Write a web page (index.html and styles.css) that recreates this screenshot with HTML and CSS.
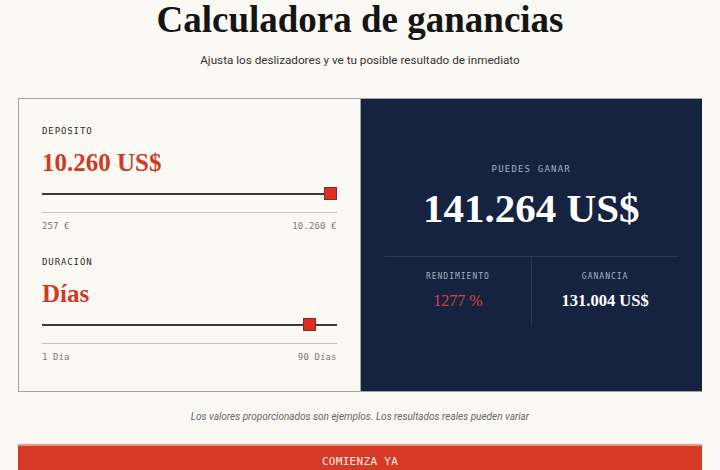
FILE: index.html
```html
<!DOCTYPE html>
<html lang="es">
<head>
    <meta charset="UTF-8">
    <meta name="viewport" content="width=device-width, initial-scale=1.0">
    <title>Calculadora de ganancias</title>
    <link rel="stylesheet" href="styles.css">
</head>
<body>
    <div class="page">
        <h1>Calculadora de ganancias</h1>
        <p class="subtitle">Ajusta los deslizadores y ve tu posible resultado de inmediato</p>

        <div class="calc">
            <div class="inputs">
                <div class="field">
                    <div class="label">Depósito</div>
                    <div class="value">10.260 US$</div>
                    <div class="slider">
                        <div class="track"></div>
                        <div class="thumb" style="left: 100%"></div>
                    </div>
                    <div class="range">
                        <span>257 €</span>
                        <span>10.260 €</span>
                    </div>
                </div>
                <div class="field">
                    <div class="label">Duración</div>
                    <div class="value">Días</div>
                    <div class="slider">
                        <div class="track"></div>
                        <div class="thumb" style="left: 93%"></div>
                    </div>
                    <div class="range">
                        <span>1 Día</span>
                        <span>90 Días</span>
                    </div>
                </div>
            </div>

            <div class="results">
                <div class="label light">Puedes ganar</div>
                <div class="total">141.264 US$</div>
                <div class="stats">
                    <div class="stat">
                        <div class="label small">Rendimiento</div>
                        <div class="stat-value red">1277 %</div>
                    </div>
                    <div class="stat">
                        <div class="label small">Ganancia</div>
                        <div class="stat-value">131.004 US$</div>
                    </div>
                </div>
            </div>
        </div>

        <p class="note">Los valores proporcionados son ejemplos. Los resultados reales pueden variar</p>

        <button class="cta">Comienza ya</button>
    </div>
</body>
</html>
```

FILE: styles.css
```css
body {
    margin: 0;
    background-color: #fbf9f4;
    font-family: Roboto, "Liberation Sans", sans-serif;
    color: #1a1a1a;
}
.page {
    padding: 0 18px;
}
h1 {
    margin: 0;
    text-align: center;
    font-family: "Liberation Serif", serif;
    font-size: 37px;
    font-weight: bold;
    line-height: 40px;
    color: #151515;
}
.subtitle {
    margin: 12px 0 0;
    text-align: center;
    font-size: 11.7px;
    line-height: 16px;
    color: #333;
}
.calc {
    display: grid;
    grid-template-columns: 1fr 1fr;
    margin-top: 30px;
    border: 1px solid #a3a3a3;
    border-right: none;
}
.inputs {
    padding: 26px 23px 29px;
    border-right: 1px solid #a3a3a3;
}
.field + .field {
    margin-top: 25px;
}
.label {
    font-family: "DejaVu Sans Mono", "Liberation Mono", monospace;
    font-size: 9px;
    letter-spacing: 0.9px;
    text-transform: uppercase;
    color: #2a2a2a;
    line-height: 12px;
}
.value {
    margin-top: 11px;
    font-family: "Liberation Serif", serif;
    font-weight: bold;
    font-size: 25px;
    line-height: 30px;
    color: #cf3b24;
}
.slider {
    position: relative;
    height: 13px;
    margin-top: 9px;
}
.track {
    position: relative;
    top: 6px;
    height: 2px;
    background-color: #3a3a3a;
}
.thumb {
    position: absolute;
    top: 0;
    width: 11px;
    height: 11px;
    margin-left: -13px;
    background-color: #d9301f;
    border: 1px solid #8a2a1c;
}
.range {
    display: flex;
    justify-content: space-between;
    margin-top: 12px;
    padding-top: 8px;
    border-top: 1px solid #c5c5c2;
    font-family: "DejaVu Sans Mono", "Liberation Mono", monospace;
    font-size: 9px;
    letter-spacing: 0.1px;
    color: #777;
}
.results {
    background-color: #152341;
    color: #fff;
    padding: 64px 24px 0;
    text-align: center;
}
.label.light {
    color: #a7b0c2;
    letter-spacing: 1.2px;
}
.total {
    margin-top: 8px;
    font-family: "Liberation Serif", serif;
    font-weight: bold;
    font-size: 41px;
    line-height: 50px;
}
.stats {
    display: grid;
    grid-template-columns: 1fr 1fr;
    margin-top: 23px;
    border-top: 1px solid #26344f;
}
.stat {
    padding: 14px 0 15px;
}
.stat + .stat {
    border-left: 1px solid #26344f;
}
.label.small {
    font-size: 8px;
    color: #a7b0c2;
    letter-spacing: 1px;
}
.stat-value {
    margin-top: 8px;
    font-family: "Liberation Serif", serif;
    font-weight: bold;
    font-size: 16.5px;
    line-height: 20px;
}
.stat-value.red {
    color: #d9432c;
    font-weight: normal;
    font-size: 16px;
}
.note {
    margin: 19px 0 0;
    text-align: center;
    font-size: 10px;
    font-style: italic;
    color: #666;
}
.cta {
    display: block;
    width: 100%;
    margin-top: 22px;
    padding: 9px 0 12px;
    border: none;
    border-top: 2px solid #e79483;
    background-color: #d63a25;
    color: #fbeee9;
    font-family: "DejaVu Sans Mono", "Liberation Mono", monospace;
    font-size: 11px;
    letter-spacing: 0.3px;
    text-transform: uppercase;
}
```
